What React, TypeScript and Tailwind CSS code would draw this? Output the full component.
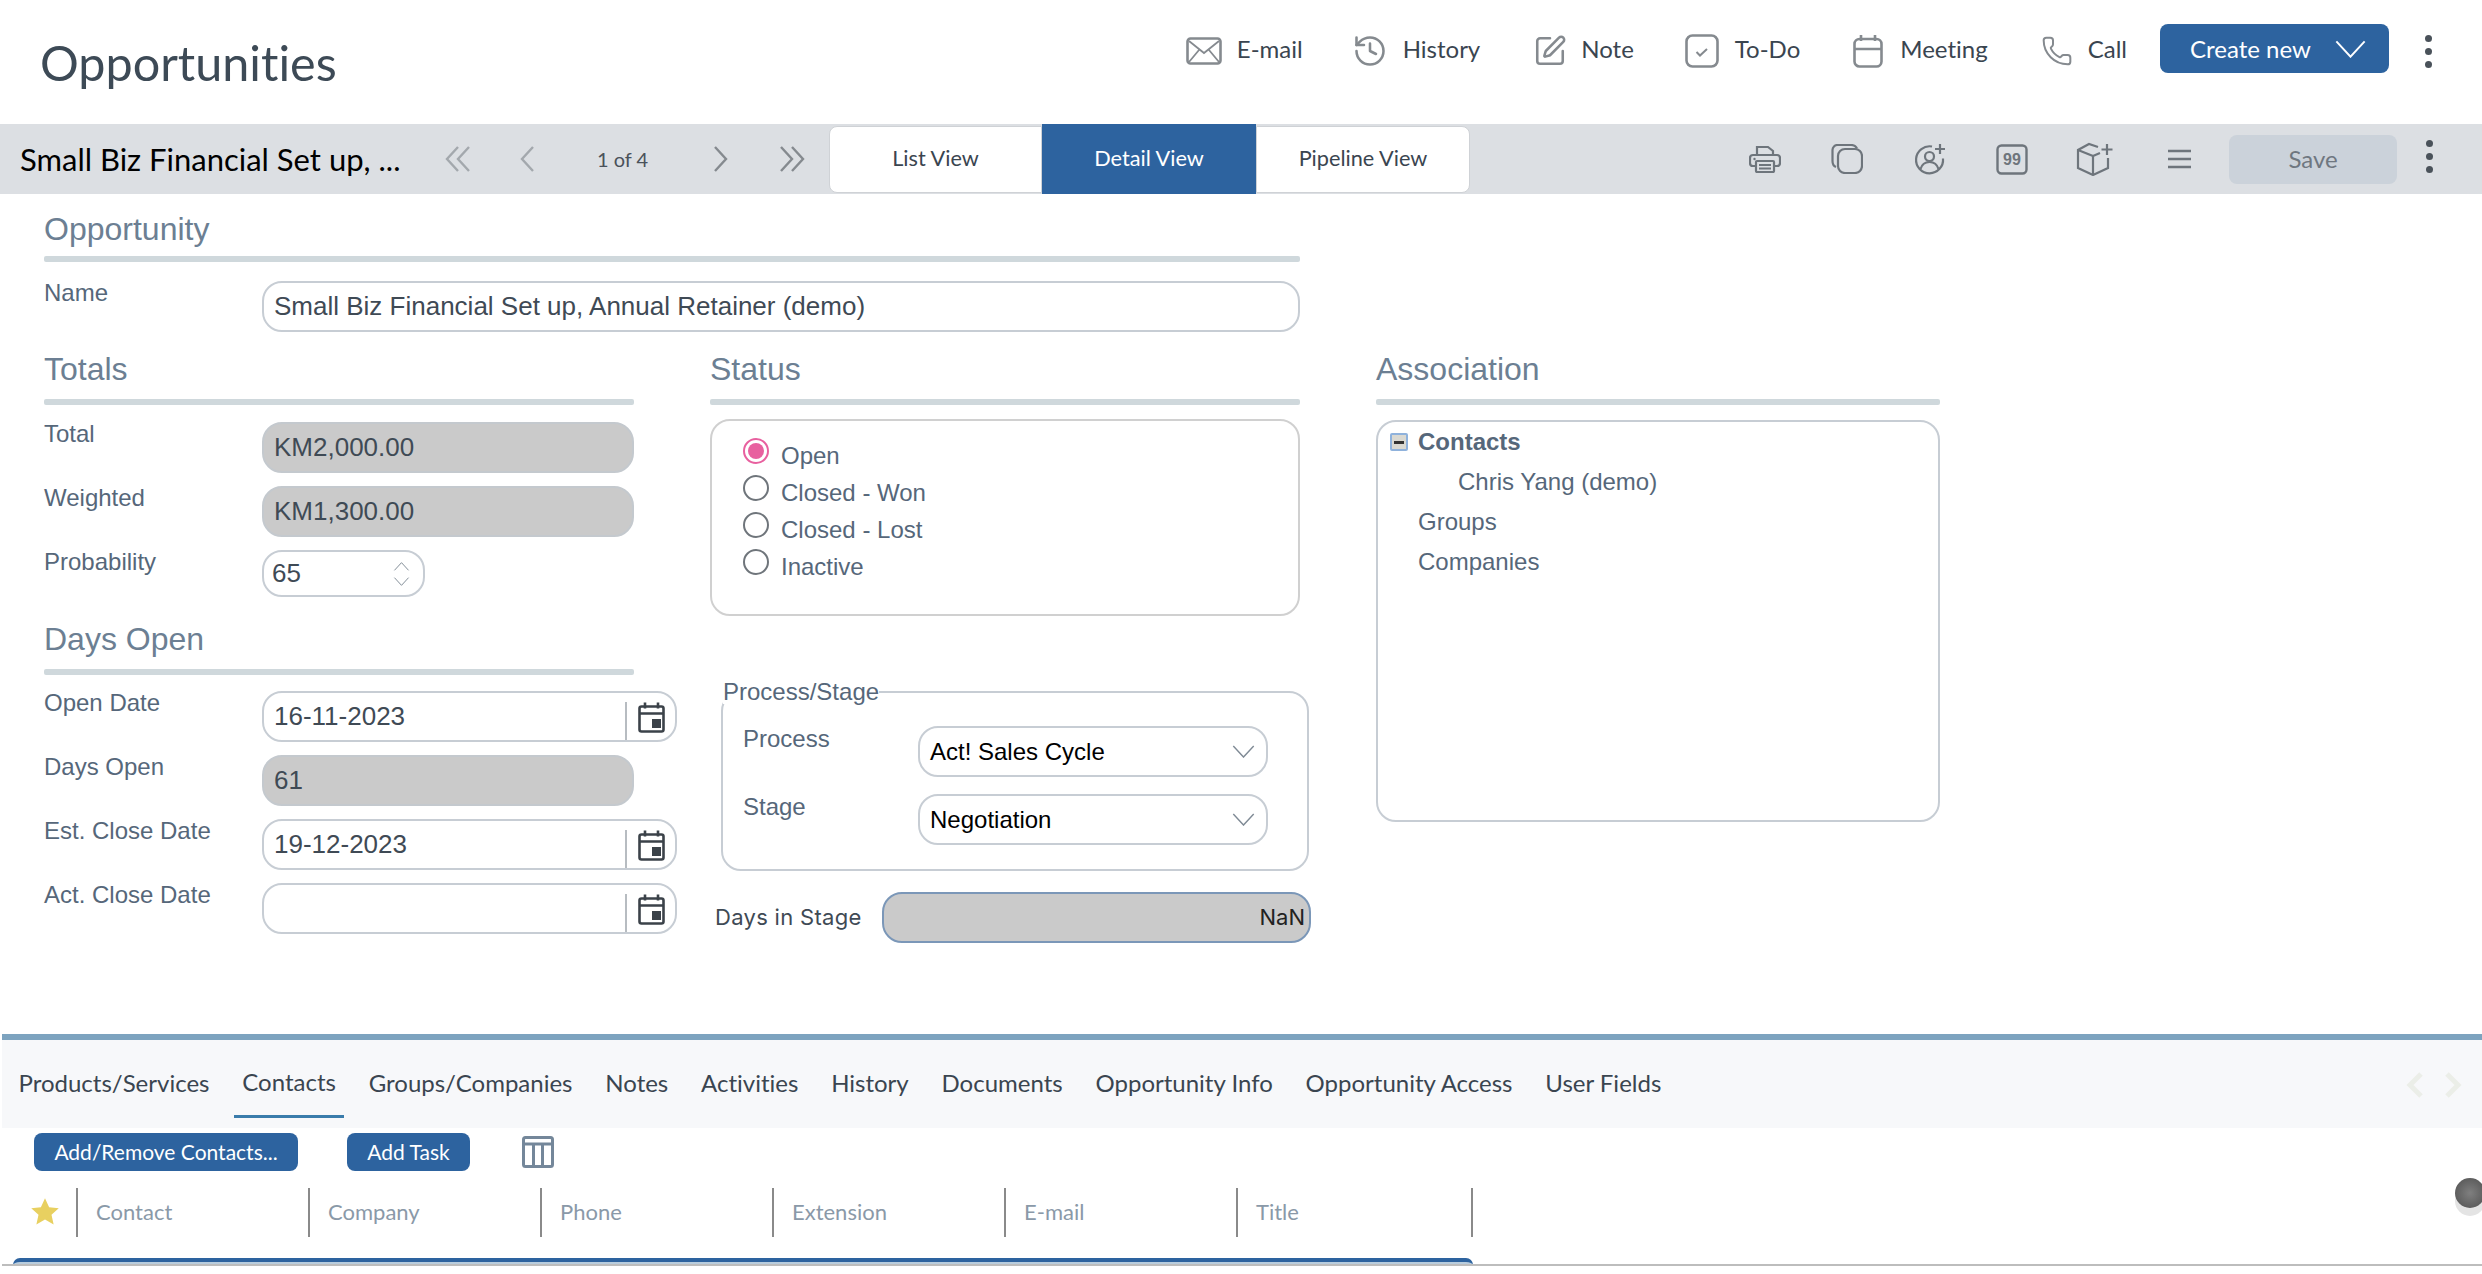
/**
 * Opportunities detail page
 */

import type { ReactNode } from 'react';
import { History, Phone, SquarePen } from 'lucide-react';

const lato = "font-['Lato','Open_Sans',sans-serif]";
const arial = "font-['Liberation_Sans',Arial,sans-serif]";

/** 顶部动作图标 */
function MailIcon() {
  return (
    <svg viewBox="0 0 36 28" className="w-[36px] h-[28px] text-[#858a8f]" fill="none" stroke="currentColor" strokeWidth="2.600">
      <rect x="1.500" y="1.500" width="33" height="25" rx="3" />
      <path d="M3 4l15 12L33 4M3 25l10-12M33 25L23 13" strokeWidth="1.800" />
    </svg>
  );
}

function TodoIcon() {
  return (
    <svg viewBox="0 0 34 34" className="w-[34px] h-[34px] text-[#858a8f]" fill="none" stroke="currentColor" strokeWidth="2.600">
      <rect x="1.500" y="1.500" width="31" height="31" rx="6" />
      <path d="M11.500 18l3.500 3.500 7-6.500" strokeWidth="2" />
    </svg>
  );
}

function MeetingIcon() {
  return (
    <svg viewBox="0 0 30 34" className="w-[30px] h-[34px] text-[#858a8f]" fill="none" stroke="currentColor" strokeWidth="2.600">
      <rect x="1.500" y="5" width="27" height="27.500" rx="5" />
      <path d="M1.500 15h27M8 1v6M22 1v6" />
    </svg>
  );
}

function CalendarIcon() {
  return (
    <svg viewBox="0 0 27 31" className="w-[27px] h-[31px]" fill="none" stroke="#3b4249" strokeWidth="2.600">
      <rect x="1.500" y="4.500" width="24" height="25" rx="2" />
      <path d="M1.500 11.500h24M7 0.500v6M20 0.500v6" />
      <rect x="14" y="17" width="9" height="9" fill="#3b4249" stroke="none" />
    </svg>
  );
}

function PrinterIcon() {
  return (
    <svg viewBox="0 0 32 28" className="w-[32px] h-[28px] text-[#6e757c]" fill="none" stroke="currentColor" strokeWidth="2.200">
      <path d="M8 10V2h11l5 4v4" />
      <path d="M7 21H4a3 3 0 0 1-3-3v-5a3 3 0 0 1 3-3h24a3 3 0 0 1 3 3v5a3 3 0 0 1-3 3h-3" />
      <rect x="7" y="16" width="18" height="11" rx="1" />
      <path d="M10 20h12M10 23.500h12" strokeWidth="1.800" />
      <circle cx="5.500" cy="14" r="1.200" fill="currentColor" stroke="none" />
    </svg>
  );
}

function AddUserIcon() {
  return (
    <svg viewBox="0 0 34 32" className="w-[34px] h-[32px] text-[#6e757c]" fill="none" stroke="currentColor" strokeWidth="2.200">
      <path d="M19 3.500a13.500 13.500 0 1 0 11 12" />
      <circle cx="16.500" cy="13.500" r="4.500" />
      <path d="M7.500 26c1.500-5 5-7 9-7s7.500 2 9 7" />
      <path d="M27 1v10M22 6h10" />
    </svg>
  );
}

function QuoteIcon() {
  return (
    <svg viewBox="0 0 32 31" className="w-[32px] h-[31px] text-[#6e757c]" fill="none" stroke="currentColor" strokeWidth="2.400">
      <rect x="1.500" y="1.500" width="29" height="28" rx="4" />
      <text x="16" y="21" textAnchor="middle" fontSize="16" fontWeight="700" fontFamily="Liberation Sans" fill="currentColor" stroke="none">99</text>
    </svg>
  );
}

function BoxPlusIcon() {
  return (
    <svg viewBox="0 0 38 34" className="w-[38px] h-[34px] text-[#6e757c]" fill="none" stroke="currentColor" strokeWidth="2.200">
      <path d="M22 5l-9-3-11 6v18l15 7 15-7V16" />
      <path d="M2 8l15 6v19M17 14l7-3" />
      <path d="M31 2v11M25.500 7.500h11" />
    </svg>
  );
}

function CopyStackIcon() {
  return (
    <svg viewBox="0 0 32 30" className="w-[32px] h-[30px] text-[#6e757c]" fill="none" stroke="currentColor" strokeWidth="2.200">
      <path d="M5 23c-2.500-1-3.500-3-3.500-6V6a5 5 0 0 1 5-5H20c3 0 5 1.500 6 3.500" />
      <rect x="7" y="5" width="24" height="24" rx="7" />
    </svg>
  );
}

function MenuIcon() {
  return (
    <svg viewBox="0 0 25 20" className="w-[25px] h-[20px] text-[#6e757c]" fill="none" stroke="currentColor" strokeWidth="2.400">
      <path d="M1 2h23M1 10h23M1 18h23" />
    </svg>
  );
}

/** 翻页箭头 */
function NavArrow({ double, flip, color }: { double?: boolean; flip?: boolean; color: string }) {
  return (
    <svg
      viewBox={double ? '0 0 26 26' : '0 0 15 26'}
      className={`h-[26px] ${double ? 'w-[26px]' : 'w-[15px]'} ${flip ? 'rotate-180' : ''}`}
      fill="none"
      stroke={color}
      strokeWidth="2.400"
    >
      <path d="M13 1L2 13l11 12" />
      {double && <path d="M24 1L13 13l11 12" />}
    </svg>
  );
}

function DownChevron({ className, color }: { className: string; color: string }) {
  return (
    <svg viewBox="0 0 24 14" className={className} fill="none" stroke={color} strokeWidth="1.500">
      <path d="M1 1l11 12L23 1" />
    </svg>
  );
}

function ActionLink({ icon, label, gap }: { icon: ReactNode; label: string; gap: string }) {
  return (
    <div className={`flex items-center ${gap}`}>
      <div className="mt-[5px]">{icon}</div>
      <span className="text-[24px] leading-[32px] text-[#3a4550]">{label}</span>
    </div>
  );
}

function Kebab() {
  return (
    <div className="flex flex-col gap-[6px]">
      <span className="w-[7px] h-[7px] rounded-full bg-[#4a525a]" />
      <span className="w-[7px] h-[7px] rounded-full bg-[#4a525a]" />
      <span className="w-[7px] h-[7px] rounded-full bg-[#4a525a]" />
    </div>
  );
}

function SectionTitle({ title, gap = 'mt-[10px]' }: { title: string; gap?: string }) {
  return (
    <div>
      <h3 className="text-[32px] leading-[40px] text-[#6c7f93]">{title}</h3>
      <div className={`h-[6px] rounded-[2px] bg-[#cfd8dc] ${gap}`} />
    </div>
  );
}

function Row({ label, children }: { label: string; children: ReactNode }) {
  return (
    <div className="flex items-start">
      <label className="w-[218px] shrink-0 text-[24px] leading-[24px] text-[#56677a]">{label}</label>
      {children}
    </div>
  );
}

function ReadOnlyBox({ value }: { value: string }) {
  return (
    <div className="w-[372px] h-[51px] pl-[10px] flex items-center rounded-[20px] border-2 border-[#c4c9ce] bg-[#cacaca] text-[26px] text-[#3f4a55]">
      {value}
    </div>
  );
}

function DateBox({ value }: { value: string }) {
  return (
    <div className="w-[415px] h-[51px] flex items-center rounded-[20px] border-2 border-[#c7cdd4] overflow-hidden">
      <span className="flex-1 pl-[10px] text-[26px] text-[#3f4a55]">{value}</span>
      <div className="w-[50px] h-[40px] mt-[9px] self-start border-l-2 border-[#b7bcc1] flex items-start justify-center">
        <CalendarIcon />
      </div>
    </div>
  );
}

function SelectBox({ value }: { value: string }) {
  return (
    <div className="w-[350px] h-[51px] pl-[10px] pr-[11px] flex items-center justify-between rounded-[20px] border-2 border-[#c7cdd4] text-[24px] text-black">
      {value}
      <DownChevron className="w-[23px] h-[13px]" color="#7f8a95" />
    </div>
  );
}

const statuses = ['Open', 'Closed - Won', 'Closed - Lost', 'Inactive'];
const tabs = ['Products/Services', 'Contacts', 'Groups/Companies', 'Notes', 'Activities', 'History', 'Documents', 'Opportunity Info', 'Opportunity Access', 'User Fields'];
const columns = ['Contact', 'Company', 'Phone', 'Extension', 'E-mail', 'Title'];

export default function App() {
  return (
    <div className={`w-[2482px] h-[1274px] overflow-hidden flex flex-col bg-white [font-variant-ligatures:none] ${arial}`}>
      {/* 页头 */}
      <header className={`h-[124px] shrink-0 flex items-center ${lato}`}>
        <h1 className="ml-[40px] text-[48.5px] leading-[60px] text-[#3d4a56]">Opportunities</h1>
        <div className="ml-auto self-start mt-[24px] flex items-center">
          <ActionLink icon={<MailIcon />} label="E-mail" gap="gap-[15px]" />
          <div className="w-[49px]" />
          <ActionLink icon={<History className="w-[36px] h-[36px] text-[#858a8f]" strokeWidth={1.7} />} label="History" gap="gap-[15px]" />
          <div className="w-[53px]" />
          <ActionLink icon={<SquarePen className="w-[34px] h-[34px] text-[#858a8f]" strokeWidth={1.8} />} label="Note" gap="gap-[14px]" />
          <div className="w-[51px]" />
          <ActionLink icon={<TodoIcon />} label="To-Do" gap="gap-[16px]" />
          <div className="w-[53px]" />
          <ActionLink icon={<MeetingIcon />} label="Meeting" gap="gap-[17px]" />
          <div className="w-[53px]" />
          <ActionLink icon={<Phone className="w-[32px] h-[32px] text-[#858a8f]" strokeWidth={1.5} />} label="Call" gap="gap-[15px]" />
          <button className="ml-[33px] w-[229px] h-[49px] rounded-[8px] bg-[#2d639f] text-white text-[24px] flex items-center pl-[30px]">
            Create new
            <DownChevron className="ml-[24px] w-[31px] h-[18px]" color="#ffffff" />
          </button>
          <div className="ml-[36px] mr-[50px] mt-[6px]"><Kebab /></div>
        </div>
      </header>

      {/* 工具条 */}
      <div className={`h-[70px] shrink-0 flex items-center bg-[#dcdfe3] ${lato}`}>
        <span className="ml-[20px] w-[380px] text-[31px] leading-[40px] text-black whitespace-nowrap">Small Biz Financial Set up, ...</span>
        <div className="ml-[45px]"><NavArrow double color="#a3a8ad" /></div>
        <div className="ml-[49px]"><NavArrow color="#a3a8ad" /></div>
        <span className="ml-[62px] w-[52px] text-[20px] text-[#4a525a] whitespace-nowrap">1 of 4</span>
        <div className="ml-[64px]"><NavArrow flip color="#858a8f" /></div>
        <div className="ml-[51px]"><NavArrow double flip color="#858a8f" /></div>
        <div className="ml-[24px] flex h-full items-center text-[21.7px]">
          <div className="w-[213px] h-[67px] pb-[2px] flex items-center justify-center rounded-l-[8px] bg-white border border-[#cfd2d6] text-[#3a4550]">List View</div>
          <div className="w-[214px] h-full pb-[2px] flex items-center justify-center bg-[#2d639f] text-white">Detail View</div>
          <div className="w-[214px] h-[67px] pb-[2px] flex items-center justify-center rounded-r-[8px] bg-white border border-[#cfd2d6] text-[#3a4550]">Pipeline View</div>
        </div>
        <div className="ml-auto flex items-center">
          <PrinterIcon />
          <div className="ml-[50px]"><CopyStackIcon /></div>
          <div className="ml-[50px]"><AddUserIcon /></div>
          <div className="ml-[49px]"><QuoteIcon /></div>
          <div className="ml-[48px]"><BoxPlusIcon /></div>
          <div className="ml-[53px]"><MenuIcon /></div>
          <button className="ml-[37px] w-[168px] h-[49px] rounded-[8px] bg-[#cbd2da] text-[24px] text-[#6f7780]">Save</button>
          <div className="ml-[29px] mr-[49px] -mt-[6px]"><Kebab /></div>
        </div>
      </div>

      {/* 表单 */}
      <main className="h-[840px] shrink-0 pl-[44px] pt-[15px]">
        <div className="w-[1256px]">
          <SectionTitle title="Opportunity" gap="mt-[7px]" />
          <div className="mt-[19px]">
            <Row label="Name">
              <div className="w-[1038px] h-[51px] pl-[10px] flex items-center rounded-[20px] border-2 border-[#c7cdd4] text-[26px] text-[#3f4a55]">
                Small Biz Financial Set up, Annual Retainer (demo)
              </div>
            </Row>
          </div>
        </div>

        <div className="mt-[17px] flex items-start">
          {/* 左列 */}
          <div className="w-[666px] shrink-0">
            <div className="w-[590px]"><SectionTitle title="Totals" /></div>
            <div className="mt-[17px] flex flex-col gap-[13px]">
              <Row label="Total"><ReadOnlyBox value="KM2,000.00" /></Row>
              <Row label="Weighted"><ReadOnlyBox value="KM1,300.00" /></Row>
              <Row label="Probability">
                <div className="w-[163px] h-[47px] pl-[8px] pr-[13px] flex items-center justify-between rounded-[20px] border-2 border-[#c7cdd4] text-[26px] text-[#3f4a55]">
                  65
                  <div className="flex flex-col gap-[6px]">
                    <DownChevron className="w-[17px] h-[9px] rotate-180" color="#7f8a95" />
                    <DownChevron className="w-[17px] h-[9px]" color="#7f8a95" />
                  </div>
                </div>
              </Row>
            </div>
            <div className="w-[590px] mt-[22px]"><SectionTitle title="Days Open" /></div>
            <div className="mt-[16px] flex flex-col gap-[13px]">
              <Row label="Open Date"><DateBox value="16-11-2023" /></Row>
              <Row label="Days Open"><ReadOnlyBox value="61" /></Row>
              <Row label="Est. Close Date"><DateBox value="19-12-2023" /></Row>
              <Row label="Act. Close Date"><DateBox value="" /></Row>
            </div>
          </div>

          {/* 中列 */}
          <div className="w-[666px] shrink-0">
            <div className="w-[590px]"><SectionTitle title="Status" /></div>
            <div className="mt-[14px] w-[590px] h-[197px] pl-[31px] pt-[16px] rounded-[20px] border-2 border-[#d0d0d0]">
              {statuses.map((s, i) => (
                <div key={s} className="h-[37px] flex items-start gap-[12px]">
                  {i === 0 ? (
                    <span className="mt-[1px] w-[26px] h-[26px] rounded-full border-2 border-[#e8609f] flex items-center justify-center">
                      <span className="w-[16px] h-[16px] rounded-full bg-[#e8609f]" />
                    </span>
                  ) : (
                    <span className="mt-[1px] w-[26px] h-[26px] rounded-full border-2 border-[#6f757b]" />
                  )}
                  <span className="mt-[5px] text-[24px] leading-[28px] text-[#56677a]">{s}</span>
                </div>
              ))}
            </div>
            <fieldset className="mt-[64px] ml-[11px] w-[588px] h-[191px] rounded-[20px] border-2 border-[#c7cdd4] pl-[20px] pt-[22px]">
              <legend className="ml-[-20px] text-[24px] leading-[24px] text-[#56677a]">Process/Stage</legend>
              <div className="flex flex-col gap-[17px]">
                <div className="flex items-start">
                  <label className="w-[175px] mt-[1px] text-[24px] leading-[24px] text-[#56677a]">Process</label>
                  <SelectBox value="Act! Sales Cycle" />
                </div>
                <div className="flex items-start">
                  <label className="w-[175px] mt-[1px] text-[24px] leading-[24px] text-[#56677a]">Stage</label>
                  <SelectBox value="Negotiation" />
                </div>
              </div>
            </fieldset>
            <div className="mt-[21px] ml-[5px] flex items-center font-['Inter',sans-serif] text-[22px] text-[#3f4a55]">
              <span className="w-[167px] tracking-[0.3px]">Days in Stage</span>
              <div className="w-[429px] h-[51px] pr-[4px] flex items-center justify-end rounded-[20px] border-2 border-[#7b97b8] bg-[#cacaca] text-[#222]">NaN</div>
            </div>
          </div>

          {/* 右列 */}
          <div className="w-[564px] shrink-0">
            <SectionTitle title="Association" />
            <div className="mt-[15px] h-[402px] pl-[12px] rounded-[20px] border-2 border-[#c7cdd4] text-[24px] text-[#56677a]">
              <div className="h-[40px] flex items-center font-bold">
                <span className="w-[18px] h-[18px] rounded-[2px] border-2 border-[#8fb2dc] bg-[#dad9d2] flex items-center justify-center">
                  <span className="w-[10px] h-[3px] bg-[#333]" />
                </span>
                <span className="ml-[10px]">Contacts</span>
              </div>
              <div className="h-[40px] flex items-center pl-[68px]">Chris Yang (demo)</div>
              <div className="h-[40px] flex items-center pl-[28px]">Groups</div>
              <div className="h-[40px] flex items-center pl-[28px]">Companies</div>
            </div>
          </div>
        </div>
      </main>

      {/* 底部标签与表格 */}
      <section className={`relative flex-1 ml-[2px] ${lato}`}>
        <div className="h-[6px] bg-[#7da3bf]" />
        <div className="h-[88px] flex items-start gap-[32.8px] pl-[16.5px] bg-[#f7f8fa] text-[24px] text-[#3a4550]">
          {tabs.map((t) => (
            <div key={t} className={t === 'Contacts' ? 'relative pt-[26px] leading-[32px]' : 'pt-[27px] leading-[32px]'}>
              {t}
              {t === 'Contacts' && <span className="absolute left-[-8px] right-[-8px] top-[75px] h-[3px] bg-[#3a7cab]" />}
            </div>
          ))}
          <div className="ml-auto mr-[20px] mt-[32px] flex gap-[20px]">
            <svg viewBox="0 0 18 26" className="w-[18px] h-[26px]" fill="none" stroke="#ebeee8" strokeWidth="5"><path d="M15 2L4 13l11 11" /></svg>
            <svg viewBox="0 0 18 26" className="w-[18px] h-[26px]" fill="none" stroke="#ebeee8" strokeWidth="5"><path d="M3 2l11 11L3 24" /></svg>
          </div>
        </div>
        <div className="mt-[5px] flex items-center pl-[32px] text-[21px] text-white">
          <button className="w-[264px] h-[38px] rounded-[8px] bg-[#2d639f] whitespace-nowrap">Add/Remove Contacts...</button>
          <button className="ml-[49px] w-[123px] h-[38px] rounded-[8px] bg-[#2d639f]">Add Task</button>
          <svg viewBox="0 0 32 32" className="ml-[52px] w-[32px] h-[32px] text-[#74879a]" fill="none" stroke="currentColor" strokeWidth="3">
            <rect x="1.500" y="1.500" width="29" height="29" rx="2" />
            <path d="M1.500 8h29M11.500 8v22M20.500 8v22" />
          </svg>
        </div>
        <div className="mt-[17px] h-[49px] flex items-stretch pl-[28px]">
          <svg viewBox="0 0 24 24" className="w-[30px] h-[30px] mt-[9px] text-[#e8d060]" fill="currentColor">
            <path d="M12 1l3.300 7.200 7.700.8-5.800 5.200 1.700 7.800L12 18l-6.900 4 1.700-7.800L1 9l7.700-.8z" />
          </svg>
          <div className="ml-[16px] flex">
            {columns.map((c, i) => (
              <div key={c} className={`${i === 5 ? 'w-[235px]' : 'w-[232px]'} border-l-2 border-[#8a8a8a] pl-[18px] pt-[9px] text-[22px] leading-[30px] text-[#8a99a8]`}>{c}</div>
            ))}
            <div className="border-l-2 border-[#8a8a8a]" />
          </div>
        </div>
        <div className="mt-[21px] ml-[11px] w-[1460px] h-[7px] rounded-t-[12px] border-t-4 border-[#2d639f] bg-[#b9cddd]" />
        <div className="absolute left-0 right-0 top-[230px] h-[2px] bg-[#bdbdbd]" />
        {/* 右侧悬浮球 */}
        <div className="absolute right-[-3px] top-[144px] w-[30px] h-[38px]">
          <div className="absolute inset-x-0 bottom-0 h-[30px] rounded-full bg-[#e4e4e4]" />
          <div className="absolute inset-x-0 top-0 h-[30px] rounded-full bg-[radial-gradient(circle,#7f7f7f,#4f4f4f)]" />
        </div>
      </section>
    </div>
  );
}
